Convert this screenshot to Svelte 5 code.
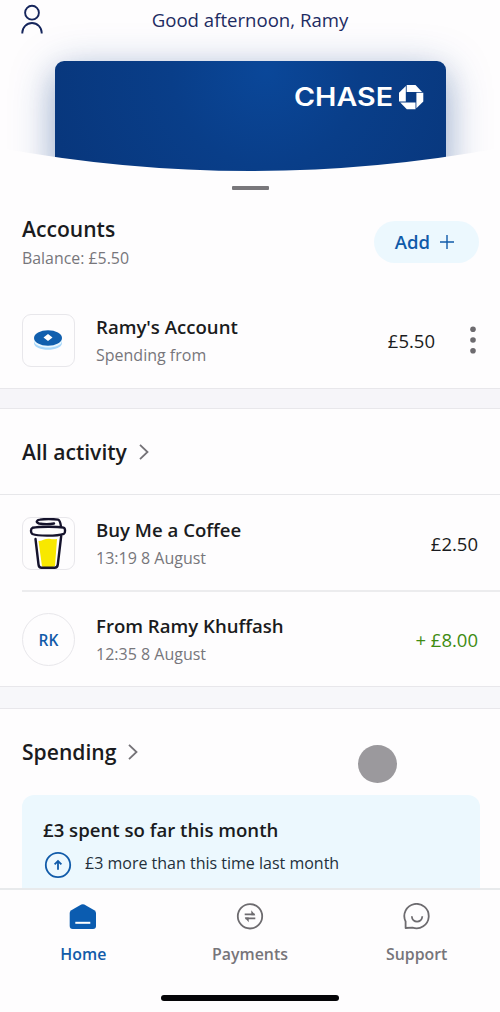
<script>
  const activity = [
    { title: 'Buy Me a Coffee', time: '13:19 8 August', amount: '£2.50', coffee: true },
    { title: 'From Ramy Khuffash', time: '12:35 8 August', amount: '+ £8.00', credit: true }
  ];
</script>

<div class="screen">
  <header class="hero">
    <svg class="profile" viewBox="0 0 24 32" width="24" height="32" fill="none" stroke="#16265c" stroke-width="1.9">
      <circle cx="12" cy="9.700" r="6.900" />
      <path d="M2.300 30.500v-.8a9.700 9.700 0 0 1 19.400 0v.8" />
    </svg>
    <h1>Good afternoon, Ramy</h1>
    <div class="card">
      <svg class="brand" viewBox="0 0 132 44" width="132" height="44">
        <text x="-1" y="33" textLength="99" lengthAdjust="spacingAndGlyphs">CHASE</text>
        <g transform="translate(104 12)" fill="#fff">
          <path d="M7.700 0h8.800l6.600 6.900H7.700z" />
          <path d="M24.300 7.800v8.800l-6.900 6.600V7.800z" />
          <path d="M16.500 24.300H7.800l-6.600-6.900h15.300z" />
          <path d="M0 16.500V7.700L6.800 1v15.500z" />
        </g>
      </svg>
    </div>
  </header>

  <div class="handle"></div>

  <section class="accounts">
    <div class="top">
      <div>
        <h2>Accounts</h2>
        <p class="balance">Balance: £5.50</p>
      </div>
      <button class="add">Add
        <svg viewBox="0 0 14 14" width="14" height="14" stroke="#115ba9" stroke-width="1.4"><path d="M7 0v14M0 7h14" /></svg>
      </button>
    </div>
    <div class="row account">
      <div class="tile">
        <svg viewBox="0 0 30 22" width="30" height="22">
          <path d="M1 10v4c0 9 28 9 28 0v-4z" fill="#a9d8fb" />
          <path d="M1 9v2.700c0 9 28 9 28 0V9z" fill="#e9f7ff" />
          <ellipse cx="15" cy="9" rx="14" ry="7.700" fill="#115fae" />
          <path d="M15 5l4.500 3.500L15 12l-4.500-3.500z" fill="#fff" />
        </svg>
      </div>
      <div class="label"><h3>Ramy's Account</h3><p>Spending from</p></div>
      <span class="amount">£5.50</span>
      <svg class="more" viewBox="0 0 6 28" width="6" height="28" fill="#6d6b6f">
        <circle cx="3" cy="3.300" r="2.800" /><circle cx="3" cy="14" r="2.800" /><circle cx="3" cy="24.700" r="2.800" />
      </svg>
    </div>
  </section>

  <div class="band"></div>

  <section>
    <div class="heading activity-heading">
      <h2>All activity</h2>
      <svg viewBox="0 0 10 16" width="10" height="16" fill="none" stroke="#747277" stroke-width="1.8"><path d="M1 .8 8.500 8 1 15.200" /></svg>
    </div>
    {#each activity as item}
      <div class="row entry">
        {#if item.coffee}
          <div class="tile coffee">
            <svg viewBox="0 0 51 51" width="51" height="51" fill="none" stroke="#15132c" stroke-width="2.400" stroke-linecap="round" stroke-linejoin="round">
              <path d="M15.500 23c4-.2 7-2.800 11-2.300 3 .5 4 1 7.500.2L32 48c-4 2-9 1.500-13 .5z" fill="#f8e800" stroke="none" />
              <path d="M31 5.500c-5 .8-11 .6-15 0-3.500-1-2.500-3.500 1-3.900 5-.7 12-.7 18 0 1.500.4 2.500 3 3 7" />
              <path d="M9.500 9.800c7-1.400 24-1.400 31-.2 2 .5 2 5.300.4 6.200-7 2.400-26 2.400-31.500.2-2-1.400-1.800-5.400.1-6.200z" fill="#fefdfe" />
              <path d="M12.500 21 15.500 46.500c.3 2.300 1 3.300 3 3.300h13c2.300 0 3-.9 3.300-3.300l3.400-28.500" />
            </svg>
          </div>
        {:else}
          <div class="tile initials">RK</div>
        {/if}
        <div class="label"><h3>{item.title}</h3><p>{item.time}</p></div>
        <span class="amount" class:credit={item.credit}>{item.amount}</span>
      </div>
    {/each}
  </section>

  <div class="band lower"></div>

  <section class="spending">
    <div class="heading">
      <h2>Spending</h2>
      <svg viewBox="0 0 10 16" width="10" height="16" fill="none" stroke="#747277" stroke-width="1.8"><path d="M1 .8 8.500 8 1 15.200" /></svg>
    </div>
    <div class="touch"></div>
    <div class="summary">
      <h3>£3 spent so far this month</h3>
      <div class="compare">
        <svg viewBox="0 0 28 28" width="28" height="28" fill="none" stroke="#115ba9" stroke-width="1.8">
          <circle cx="14" cy="14" r="12.200" />
          <path d="M14 18.800v-8M10.600 13.300 14 10l3.400 3.300" />
        </svg>
        <p>£3 more than this time last month</p>
      </div>
    </div>
  </section>

  <nav>
    <div class="tabs">
      <div class="tab active">
        <svg viewBox="0 0 28 28" width="28" height="28">
          <path d="M12.300 1.600q1.500-.8 3 0l10 5.700q1.700 1 1.700 2.800V23q0 3-3 3H3.700q-3 0-3-3V10.100q0-1.800 1.600-2.800z" fill="#0b5cb0" />
          <path d="M6.300 19.800h15" stroke="#fff" stroke-width="2" />
        </svg>
        <span>Home</span>
      </div>
      <div class="tab">
        <svg viewBox="0 0 28 28" width="28" height="28" fill="none" stroke="#6d6b6f" stroke-width="1.8">
          <circle cx="14" cy="13.300" r="12.200" />
          <path d="M8.700 11.300h10M19.300 15.300h-10" />
          <path d="m15.300 7.300 4 4.900h-4zM12.700 19.300l-4-4.900h4z" fill="#6d6b6f" stroke="none" />
        </svg>
        <span>Payments</span>
      </div>
      <div class="tab">
        <svg viewBox="0 0 28 28" width="28" height="28" fill="none" stroke="#6d6b6f" stroke-width="1.800" stroke-linejoin="round">
          <path d="M2.600 25v-6.500A12.200 12.200 0 1 1 9.500 24.600z" />
          <path d="M8.800 13.300c.3 7 10.200 7 10.500 0" />
        </svg>
        <span>Support</span>
      </div>
    </div>
    <div class="home-indicator"></div>
  </nav>
</div>

<style>
  :global(body) { margin: 0; background: #fefdfe; }
  .screen {
    box-sizing: border-box;
    width: 500px;
    height: 1012px;
    overflow: hidden;
    display: flex;
    flex-direction: column;
    background: #fefdfe;
    color: #1a1b20;
    font-family: "Open Sans", sans-serif;
  }
  h1, h2, h3, p { margin: 0; white-space: nowrap; }
  svg { display: block; flex: none; }
  .hero {
    position: relative;
    height: 172px;
    flex: none;
    clip-path: path("M0 0H500V148Q250 194 0 148Z");
  }
  .profile { position: absolute; left: 20px; top: 3px; z-index: 1; }
  h1 {
    position: relative;
    z-index: 1;
    padding-top: 6px;
    height: 55px;
    line-height: 28px;
    text-align: center;
    font-size: 18.600px;
    font-weight: 400;
    color: #1d2b62;
  }
  .card {
    margin: 0 54px 0 55px;
    height: 120px;
    display: flex;
    justify-content: flex-end;
    border-radius: 9px 9px 0 0;
    background: radial-gradient(circle at 54% 8%, #0a4799 0, #093e89 40%, #08367b 100%);
    box-shadow: 0 10px 44px rgba(20, 67, 143, .36), 0 12px 28px rgba(20, 67, 120, .14);
  }
  .brand { margin: 12px 19px 0 0; overflow: visible; }
  .brand text { font: 600 25px Inter, sans-serif; fill: #fff; }
  .handle { flex: none; width: 37px; height: 4px; margin: 14px 0 0 232px; border-radius: 1px; background: #79777b; }
  .accounts { height: 198px; flex: none; }
  .top { display: flex; justify-content: space-between; padding: 25px 21px 0 22px; height: 78px; }
  h2 { font-size: 21.100px; line-height: 28px; font-weight: 600; }
  .balance { font-size: 15.900px; line-height: 30px; color: #77767b; }
  .add {
    display: flex;
    align-items: center;
    justify-content: center;
    gap: 10px;
    width: 105px;
    height: 42px;
    margin-top: 6px;
    padding: 0 4px 1px 0;
    border: 0;
    border-radius: 21px;
    background: #ecf8fe;
    color: #115ba9;
    font: 600 18.500px "Open Sans", sans-serif;
  }
  .row { display: flex; align-items: center; padding: 0 22px 0 0; margin-left: 22px; box-sizing: border-box; }
  .account { height: 96px; }
  .tile {
    box-sizing: border-box;
    width: 53px;
    height: 53px;
    flex: none;
    display: flex;
    align-items: center;
    justify-content: center;
    border: 1px solid #e8e7eb;
    border-radius: 9px;
    margin: 0 21px 1px 0;
  }
  .account .tile, .account .more { margin-bottom: 2px; }
  .account .tile svg { margin-right: 2px; }
  .initials { border-radius: 50%; color: #115ba9; font-size: 15.500px; font-weight: 600; }
  .label { flex: 1; }
  h3 { font-size: 18.600px; line-height: 28px; font-weight: 600; }
  .label p { font-size: 16px; line-height: 28px; color: #77767b; }
  .amount { font-size: 18.500px; line-height: 28px; }
  .credit { color: #3f8c12; }
  .more { margin: 0 2px 0 35px; }
  .account { padding-right: 0; margin-right: 22px; }
  .band {
    box-sizing: border-box;
    height: 21px;
    flex: none;
    background: #f6f5f9;
    border: solid #e8e7eb;
    border-width: 1px 0;
  }
  .band.lower { height: 23px; background: #f7f7fa; }
  .heading { display: flex; align-items: center; gap: 12px; padding-left: 22px; height: 86px; box-sizing: border-box; }
  .activity-heading { border-bottom: 1px solid #e7e7ea; }
  .entry { height: 95px; padding-top: 2px; }
  .entry + .entry { border-top: 2px solid #ececee; height: 96px; padding-top: 2px; }
  .spending { position: relative; flex: 1; min-height: 0; overflow: hidden; }
  .touch { position: absolute; left: 358px; top: 36px; width: 39px; height: 38px; border-radius: 50%; background: #9b999d; }
  .summary { box-sizing: border-box; height: 120px; margin: 0 20px 0 22px; padding: 21px; border-radius: 12px 12px 0 0; background: #ecf8fe; }
  .compare { display: flex; align-items: center; gap: 13px; padding-left: 1px; margin-top: 7px; }
  .compare p { font-size: 16px; line-height: 24px; position: relative; top: -2px; color: #23303b; }
  nav { box-sizing: border-box; height: 124px; flex: none; border-top: 2px solid #e8eaec; background: #fefdfe; }
  .tabs { display: grid; grid-template-columns: repeat(3, 1fr); height: 105px; }
  .tab { display: flex; flex-direction: column; align-items: center; padding-top: 13px; color: #77757a; font-size: 15.900px; font-weight: 600; }
  .tab span { line-height: 24px; margin-top: 11px; }
  .active { color: #115ba9; }
  .home-indicator { width: 178px; height: 6px; margin-left: 161px; border-radius: 3px; background: #050508; }
</style>
